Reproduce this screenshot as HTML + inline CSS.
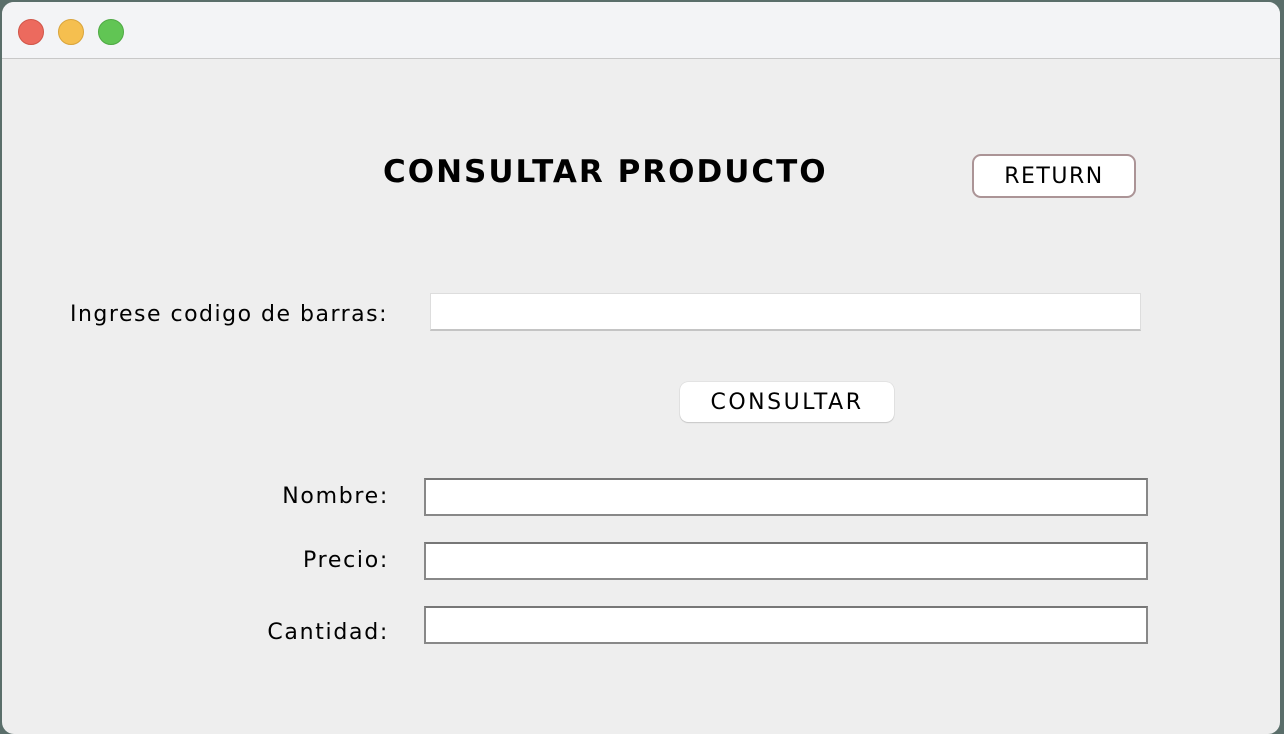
<!DOCTYPE html>
<html><head><style>
body{margin:0;width:1284px;height:734px;background:#5a6e6a;overflow:hidden;font-family:"DejaVu Sans","Liberation Sans",sans-serif;}
.win{position:absolute;left:2px;top:2px;width:1278px;height:732px;border-radius:12px;background:#eeeeee;overflow:hidden}
.tb{position:absolute;left:0;top:0;width:100%;height:56px;background:#f3f4f6;border-bottom:1px solid #c8c8c8}
.d{position:absolute;top:17px;width:24px;height:24px;border-radius:50%}
.a{position:absolute;white-space:nowrap;color:#000;font-size:22px;letter-spacing:1.5px}
.r{right:891px;text-align:right;letter-spacing:1.7px}
.f{position:absolute;background:#fff;box-sizing:border-box}
.g{border:2px solid #888;border-top-color:#777}
</style></head><body>
<div class="win">
<div class="tb">
<div class="d" style="left:16px;background:#ec6a5e;border:0.5px solid #d05548"></div>
<div class="d" style="left:56px;background:#f5bf4f;border:0.5px solid #d9a43b"></div>
<div class="d" style="left:96px;background:#61c554;border:0.5px solid #4ea943"></div>
</div>
<div class="a" style="left:381px;top:152px;font-size:31px;font-weight:bold;letter-spacing:2px">CONSULTAR PRODUCTO</div>
<div class="f" style="left:970px;top:152px;width:164px;height:44px;border:2px solid #ab9496;border-radius:9px;font-size:22px;letter-spacing:1.5px;text-align:center;line-height:41px">RETURN</div>
<div class="a" style="left:68px;top:300px">Ingrese codigo de barras:</div>
<div class="f" style="left:428px;top:291px;width:711px;height:38px;border:1px solid #ddd;border-bottom:2px solid #c4c4c4"></div>
<div class="f" style="left:678px;top:380px;width:214px;height:40px;border-radius:8px;box-shadow:0 0 1px #aaa,0 1px 1px #ccc;font-size:22px;letter-spacing:2.5px;text-align:center;line-height:42px">CONSULTAR</div>
<div class="a r" style="top:482px">Nombre:</div>
<div class="f g" style="left:422px;top:476px;width:724px;height:38px"></div>
<div class="a r" style="top:546px">Precio:</div>
<div class="f g" style="left:422px;top:540px;width:724px;height:38px"></div>
<div class="a r" style="top:618px">Cantidad:</div>
<div class="f g" style="left:422px;top:604px;width:724px;height:38px"></div>
</div>
</body></html>
